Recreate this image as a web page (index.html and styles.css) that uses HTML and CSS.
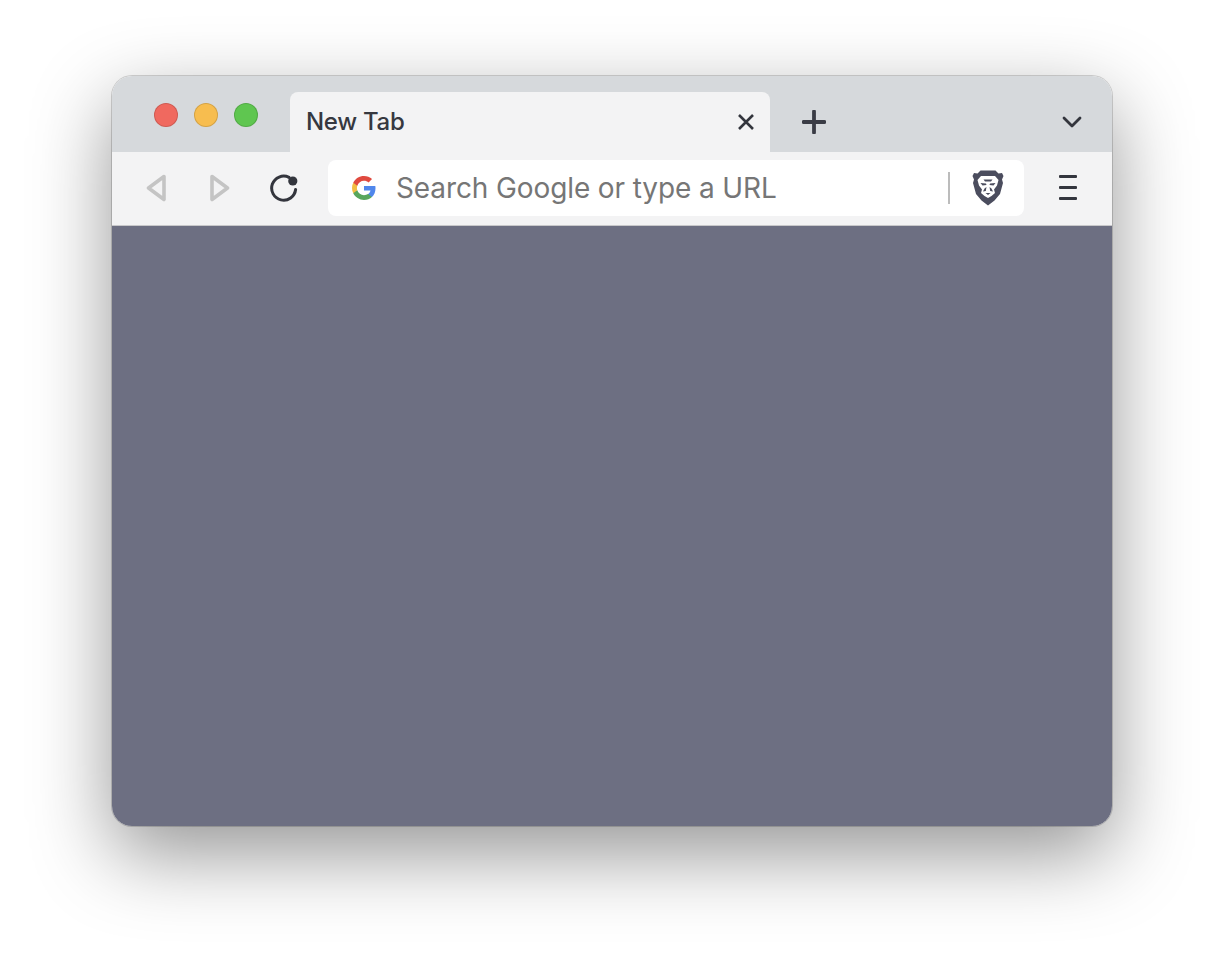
FILE: index.html
```html
<!DOCTYPE html>
<html>
<head>
    <title>New Tab</title>
    <link rel="stylesheet" href="styles.css">
</head>
<body>
    <div class="window">
        <div class="tabstrip">
            <div class="traffic">
                <span class="light red"></span>
                <span class="light yellow"></span>
                <span class="light green"></span>
            </div>
            <div class="tab">
                <span class="tab-title">New Tab</span>
                <svg class="tab-close" width="18" height="18" viewBox="0 0 18 18">
                    <path d="M2 2L16 16M16 2L2 16" stroke="#33353d" stroke-width="2.600" fill="none"/>
                </svg>
            </div>
            <svg class="new-tab" width="24" height="24" viewBox="0 0 24 24">
                <path d="M12 1.500V22.500M1.500 12H22.500" stroke="#3a3c45" stroke-width="3.800" stroke-linecap="round" fill="none"/>
            </svg>
            <svg class="tab-list" width="20" height="12" viewBox="0 0 20 12">
                <path d="M2 2L10 10L18 2" stroke="#33353d" stroke-width="2.800" stroke-linecap="round" stroke-linejoin="round" fill="none"/>
            </svg>
        </div>
        <div class="toolbar">
            <div class="nav">
                <svg width="20" height="28" viewBox="0 0 20 28">
                    <path d="M18 2.500L2.500 14L18 25.500Z" stroke="#c4c4c4" stroke-width="3.600" stroke-linejoin="round" fill="none"/>
                </svg>
                <svg width="20" height="28" viewBox="0 0 20 28">
                    <path d="M2 2.500L17.500 14L2 25.500Z" stroke="#c4c4c4" stroke-width="3.600" stroke-linejoin="round" fill="none"/>
                </svg>
                <svg width="28" height="28" viewBox="0 0 28 28">
                    <path d="M19 3.400A12 12 0 1 0 25.600 15.500" stroke="#33353d" stroke-width="3" stroke-linecap="round" fill="none"/>
                    <circle cx="22.800" cy="7" r="4.600" fill="#33353d"/>
                </svg>
            </div>
            <div class="omnibox">
                <svg class="google" width="24" height="24" viewBox="0 0 48 48">
                    <path fill="#5087ec" d="M47 24.500c0-1.600-.1-3.200-.4-4.700H24v9h13c-.6 3-2.300 5.600-4.900 7.300v6h7.900C44.600 37.900 47 31.800 47 24.500z"/>
                    <path fill="#58a65c" d="M24 48c6.500 0 11.900-2.100 15.900-5.800l-7.800-6.100c-2.200 1.500-4.900 2.300-8.100 2.300-6.200 0-11.500-4.200-13.400-9.900H2.500v6.200C6.500 42.600 14.600 48 24 48z"/>
                    <path fill="#f2bd42" d="M10.600 28.500c-1-3-1-6.100 0-9V13.300H2.500c-3.300 6.700-3.300 14.600 0 21.400z"/>
                    <path fill="#e04a3f" d="M24 9.500c3.500 0 6.700 1.200 9.200 3.600l6.900-6.900C35.900 2.300 30.100 0 24 0 14.600 0 6.500 5.400 2.500 13.300l8.100 6.200C12.500 13.700 17.800 9.500 24 9.500z"/>
                </svg>
                <span class="omnibox-text">Search Google or type a URL</span>
                <span class="omnibox-sep"></span>
                <svg class="brave" width="32" height="36" viewBox="0 0 32 36">
                    <path fill="#4b4d5e" d="M8.500 0.500H23.500L26.500 3.500L30 3L31.500 6L30 9.500L31 13L28 24L22.500 30.500L16 35.500L9.500 30.500L4 24L1 13L2 9.500L0.500 6L2 3L5.500 3.500Z"/>
                    <path fill="#fff" d="M9 6H23L26.500 10L25 15.500L22 19.500L23 23L19.500 26L16 28L12.500 26L9 23L10 19.500L7 15.500L5.500 10Z"/>
                    <path fill="#4b4d5e" d="M11.500 9.500H20.500L19 11.500H13ZM8.500 13L14 13.500L14.500 15L10.500 15.500ZM23.500 13L18 13.500L17.500 15L21.500 15.500ZM14.500 17L13.800 21L11 21.500L12.500 18.500ZM17.500 17L18.200 21L21 21.500L19.500 18.500ZM13.500 23H18.500L16 25Z"/>
                </svg>
            </div>
            <div class="menu">
                <span class="menu-line"></span>
                <span class="menu-line"></span>
                <span class="menu-line"></span>
            </div>
        </div>
        <div class="content"></div>
    </div>
</body>
</html>
```

FILE: styles.css
```css
html, body {
    height: 100%;
}

body {
    margin: 0;
    background-color: #ffffff;
    font-family: Inter, "Liberation Sans", sans-serif;
    overflow: hidden;
}

.window {
    width: 1000px;
    height: 750px;
    margin: 76px 0 0 112px;
    display: flex;
    flex-direction: column;
    border-radius: 20px;
    overflow: hidden;
    box-shadow: 0 0 0 1px rgba(0, 0, 0, 0.16), 0 28px 80px rgba(0, 0, 0, 0.42);
}

.tabstrip {
    height: 76px;
    flex: none;
    display: flex;
    background-color: #d6d9dc;
}

.traffic {
    width: 178px;
    box-sizing: border-box;
    padding: 27px 0 0 42px;
    display: flex;
    gap: 16px;
}

.light {
    width: 24px;
    height: 24px;
    box-sizing: border-box;
    border-radius: 50%;
    border: 1px solid rgba(0, 0, 0, 0.14);
}

.red { background-color: #f0695f; }
.yellow { background-color: #f7bd4f; }
.green { background-color: #5fc650; }

.tab {
    width: 480px;
    margin-top: 16px;
    box-sizing: border-box;
    padding: 0 15px 0 16px;
    display: flex;
    align-items: center;
    justify-content: space-between;
    background-color: #f3f3f4;
    border-radius: 8px 8px 0 0;
}

.tab-title {
    margin-top: -2px;
    font-size: 24px;
    font-weight: 500;
    letter-spacing: -0.3px;
    color: #36383f;
}

.new-tab {
    margin: 34px 0 0 32px;
}

.tab-list {
    margin: 40px 30px 0 auto;
}

.toolbar {
    height: 74px;
    flex: none;
    box-sizing: border-box;
    display: flex;
    align-items: flex-start;
    background-color: #f3f3f4;
    border-bottom: 1px solid #c8c8ca;
}

.nav {
    width: 216px;
    box-sizing: border-box;
    padding: 22px 0 0 34px;
    display: flex;
    gap: 44px;
    align-items: flex-start;
}

.nav svg:last-child {
    margin-left: -4px;
}

.omnibox {
    width: 696px;
    height: 56px;
    margin-top: 8px;
    box-sizing: border-box;
    padding: 0 20px 0 24px;
    display: flex;
    align-items: center;
    background-color: #ffffff;
    border-radius: 8px;
}

.omnibox-text {
    flex: 1;
    margin-left: 20px;
    font-size: 28px;
    letter-spacing: -0.11px;
    color: #767676;
}

.omnibox-sep {
    width: 2px;
    height: 32px;
    margin-right: 22px;
    background-color: #bcbcbc;
}

.menu {
    margin: 23px 0 0 35px;
    display: flex;
    flex-direction: column;
    gap: 8px;
}

.menu-line {
    width: 18px;
    height: 3px;
    border-radius: 1px;
    background-color: #33353d;
}

.content {
    flex: 1;
    background-color: #6d6f82;
}
```
